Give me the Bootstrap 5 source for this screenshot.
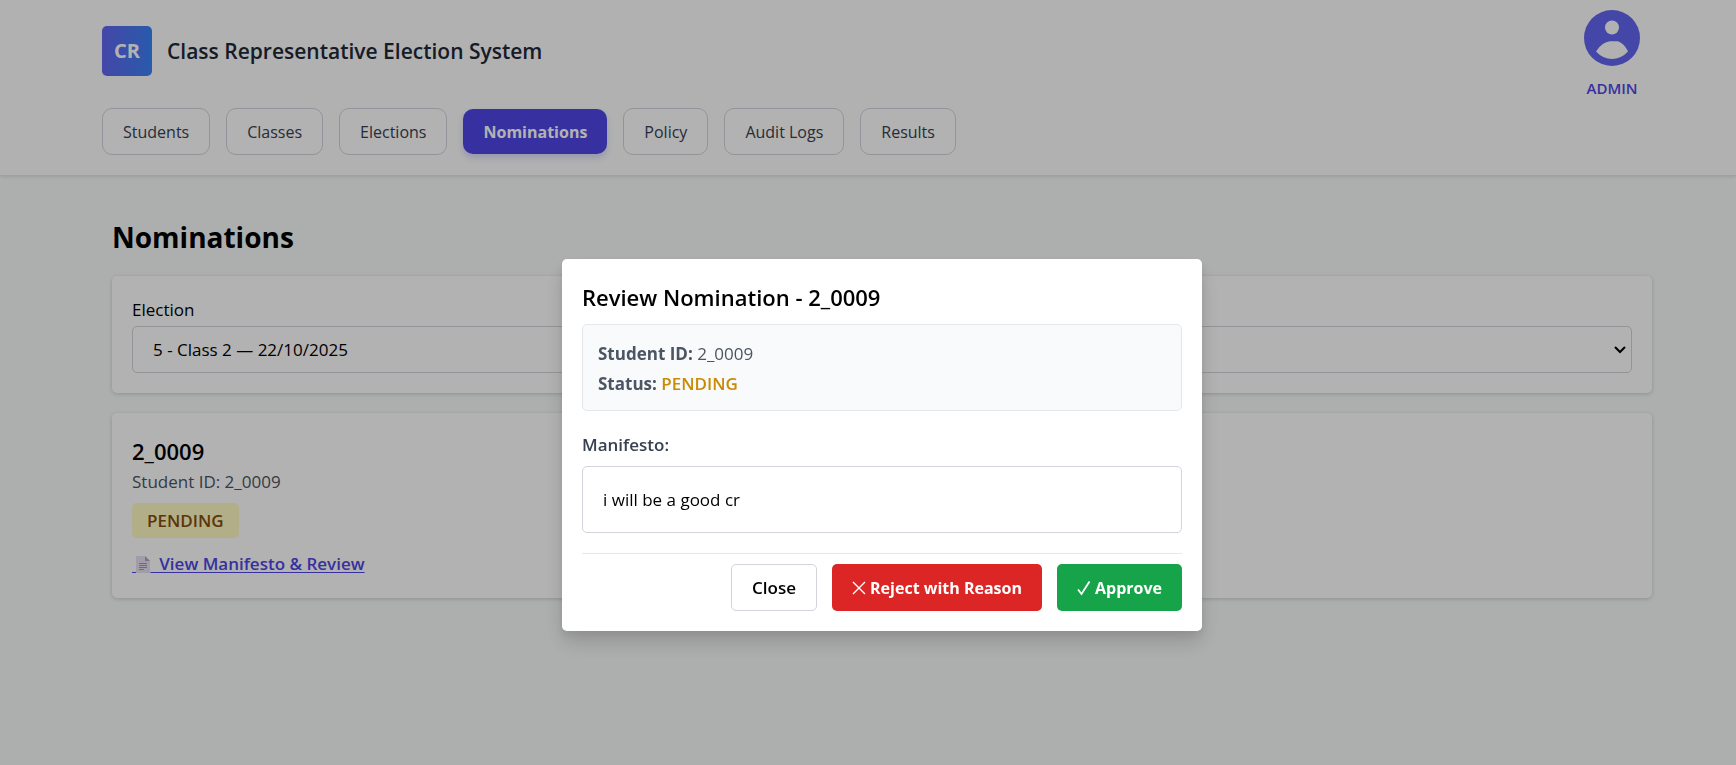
<!DOCTYPE html>
<html lang="en">
<head>
<meta charset="utf-8">
<meta name="viewport" content="width=device-width, initial-scale=1">
<title>Class Representative Election System</title>
<link href="https://cdn.jsdelivr.net/npm/bootstrap@5.3.0/dist/css/bootstrap.min.css" rel="stylesheet">
<style>
  body {
    font-family: "Open Sans", "Noto Sans", sans-serif;
    font-size: 17px;
    line-height: 30px;
    color: #000;
    background: #f8fbf9;
    overflow: hidden;
  }
  .site-header {
    padding: 10px 74px 20px 102px;
    background: #fcfefd;
    border-bottom: 1px solid #e5e7eb;
    box-shadow: 0 1px 3px rgba(0, 0, 0, .1);
  }
  .brand-logo {
    width: 50px; height: 50px;
    border-radius: 5px;
    color: #fff;
    font-size: 20px; font-weight: 700;
    background: linear-gradient(90deg, #6366f1, #3b82f6);
  }
  .brand-name { font-size: 21px; font-weight: 600; color: #1f2937; }
  .brand-row { gap: 15px; padding-top: 16px; }
  .profile { margin-right: 22px; color: #4f46e5; font-size: 15px; font-weight: 600; text-decoration: none; }
  .profile svg { width: 56px; height: 56px; margin-bottom: 7px; }
  .tabs-row { gap: 16px; margin-top: 12px; font-size: 16px; line-height: 29px; }
  .tab-link {
    padding: 9px 20px 7px;
    border: 1px solid #d1d5db;
    border-radius: 10px;
    background: #fff;
    color: #374151;
    text-decoration: none;
  }
  .tab-link.active {
    border: 0;
    background: #4f46e5;
    color: #fff;
    font-weight: 700;
    box-shadow: 0 4px 6px rgba(79, 70, 229, .2);
  }
  .content-area { padding: 40px 84px 40px 112px; }
  .page-title { font-size: 28px; line-height: 43px; font-weight: 700; margin-bottom: 17px; }
  .panel {
    padding: 20px;
    border: 0;
    border-radius: 5px;
    color: inherit;
    box-shadow: 0 1px 4px rgba(0, 0, 0, .18);
    margin-bottom: 20px;
  }
  .election-label { line-height: 28px; margin-bottom: 2px; }
  .election-select {
    height: 47px;
    padding: 0 40px 0 20px;
    border: 1px solid #d1d5db;
    border-radius: 5px;
    color: #000;
    font-size: 17px;
    background-image: url("data:image/svg+xml,%3Csvg xmlns='http://www.w3.org/2000/svg' viewBox='0 0 12 8'%3E%3Cpath d='M1 1l5 5 5-5' fill='none' stroke='%23000' stroke-width='2'/%3E%3C/svg%3E");
    background-size: 12px 8px;
    background-position: right 5px center;
  }
  .nominee { font-size: 22px; font-weight: 600; line-height: 36px; margin: 0; }
  .nominee-id { color: #4b5563; line-height: 26px; }
  .status-tag {
    padding: 3px 15px 2px;
    border-radius: 5px;
    background: #fef9c3;
    color: #854d0e;
    font-weight: 600;
    margin: 8px 0 11px;
  }
  .review-link { color: #4f46e5; font-weight: 600; line-height: 29px; text-underline-offset: 2px; }
  .review-link svg { width: 14px; height: 17px; margin-bottom: 2px; }
  .review-modal { background: rgba(0, 0, 0, .3); padding-left: 28px; overflow: hidden; }
  .review-modal .modal-dialog { max-width: 640px; margin-top: 259px; }
  .review-modal .modal-content {
    padding: 20px;
    border: 0;
    border-radius: 5px;
    color: #000;
    box-shadow: 0 12px 20px rgba(0, 0, 0, .14), 0 4px 8px rgba(0, 0, 0, .08);
  }
  .review-title { font-size: 22px; font-weight: 600; line-height: 36px; margin-bottom: 9px; }
  .facts {
    padding: 14px 15px 11px;
    border: 1px solid #e5e7eb;
    border-radius: 5px;
    background: #f9fafb;
    color: #4b5563;
    margin-bottom: 19px;
  }
  .facts b { font-weight: 700; }
  .pending { color: #ca8a04; font-weight: 600; }
  .manifesto-label { color: #374151; font-weight: 600; margin-bottom: 6px; }
  .manifesto-text { padding: 18px 20px 17px; border: 1px solid #d1d5db; border-radius: 5px; }
  .action-row { gap: 15px; margin-top: 20px; padding-top: 10px; border-top: 1px solid #e5e7eb; }
  .act {
    --bs-btn-padding-x: 20px;
    --bs-btn-padding-y: 7px;
    --bs-btn-font-size: 16px;
    --bs-btn-font-weight: 700;
    --bs-btn-border-radius: 5px;
    height: 47px;
  }
  .act-close { --bs-btn-font-weight: 600; --bs-btn-font-size: 17px; --bs-btn-color: #000; --bs-btn-border-color: #d1d5db; --bs-btn-bg: #fff; }
  .act-reject { --bs-btn-color: #fff; --bs-btn-bg: #dc2626; border: 0; }
  .act-approve { --bs-btn-color: #fff; --bs-btn-bg: #16a34a; border: 0; }
  .act svg { width: 14px; height: 16px; margin-right: 4px; }
</style>
</head>
<body>
<header class="site-header">
  <div class="d-flex justify-content-between align-items-start">
    <div class="brand-row d-flex align-items-center">
      <div class="brand-logo d-flex align-items-center justify-content-center">CR</div>
      <div class="brand-name">Class Representative Election System</div>
    </div>
    <a href="#" class="profile d-flex flex-column align-items-center">
      <svg viewBox="0 0 56 56" aria-hidden="true">
        <circle cx="28" cy="28" r="28" fill="#6366f1"/>
        <circle cx="28" cy="17.500" r="7" fill="#fcfefd"/>
        <path d="M12 41.500Q18 32 26 31.300H33.500C38 32.500 42 37 44 41.500Q37 49 28 49T12 41.500Z" fill="#fcfefd"/>
      </svg>
      <span class="lh-1 pt-2">ADMIN</span>
    </a>
  </div>
  <nav class="tabs-row d-flex flex-wrap align-items-center" aria-label="Main">
    <a class="tab-link" href="#">Students</a>
    <a class="tab-link" href="#">Classes</a>
    <a class="tab-link" href="#">Elections</a>
    <a class="tab-link active" href="#" aria-current="page">Nominations</a>
    <a class="tab-link" href="#">Policy</a>
    <a class="tab-link" href="#">Audit Logs</a>
    <a class="tab-link" href="#">Results</a>
  </nav>
</header>

<main class="content-area">
  <h1 class="page-title">Nominations</h1>
  <section class="card panel">
    <label class="election-label" for="election">Election</label>
    <select id="election" class="form-select election-select">
      <option>5 - Class 2 — 22/10/2025</option>
    </select>
  </section>
  <section class="card panel align-items-start">
    <h2 class="nominee">2_0009</h2>
    <div class="nominee-id">Student ID: 2_0009</div>
    <span class="status-tag">PENDING</span>
    <a href="#" class="review-link">&nbsp;<svg viewBox="0 0 14 17" aria-hidden="true"><path d="M0 0H9L14 5V17H0Z" fill="#e9e0f2"/><path d="M9 0V5H14Z" fill="#b1a5bd"/><path d="M3 7.500H11M3 9.500H11M3 11.500H11M3 13.500H8" stroke="#a397b0"/></svg>&nbsp; View Manifesto &amp; Review</a>
  </section>
</main>

<div class="modal d-block review-modal" role="dialog" aria-modal="true" aria-labelledby="reviewTitle">
  <div class="modal-dialog">
    <div class="modal-content">
      <h2 class="review-title" id="reviewTitle">Review Nomination - 2_0009</h2>
      <div class="facts">
        <div><b>Student ID:</b> 2_0009</div>
        <div><b>Status:</b> <span class="pending">PENDING</span></div>
      </div>
      <div class="manifesto-label">Manifesto:</div>
      <div class="manifesto-text">i will be a good cr</div>
      <div class="action-row d-flex justify-content-end">
        <button type="button" class="btn act act-close">Close</button>
        <button type="button" class="btn act act-reject d-flex align-items-center"><svg viewBox="0 0 14 16" aria-hidden="true"><path d="M1 2L13 14M13 2L1 14" fill="none" stroke="#fff" stroke-width="1.400"/></svg>Reject with Reason</button>
        <button type="button" class="btn act act-approve d-flex align-items-center"><svg viewBox="0 0 14 16" aria-hidden="true"><path d="M1 9.500L4.500 14L12.500 1.500" fill="none" stroke="#fff" stroke-width="1.800"/></svg>Approve</button>
      </div>
    </div>
  </div>
</div>
<script src="https://cdn.jsdelivr.net/npm/bootstrap@5.3.0/dist/js/bootstrap.bundle.min.js"></script>
</body>
</html>
